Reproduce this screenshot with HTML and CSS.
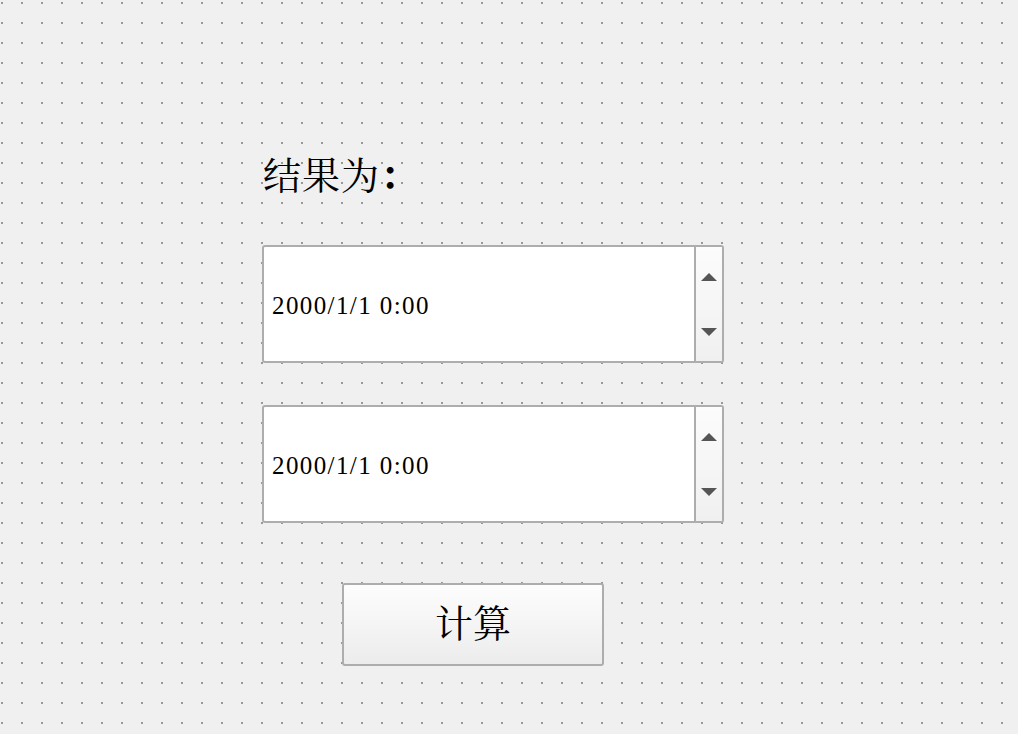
FILE: index.html
```html
<!DOCTYPE html>
<html lang="zh">
<head>
<meta charset="utf-8">
<title>Form</title>
<link rel="stylesheet" href="styles.css">
</head>
<body>
<div class="canvas">
  <div class="label">结果为<span class="colon">：</span></div>
  <div class="spin first">
    <div class="field">2000/1/1 0:00</div>
    <div class="btns">
      <span class="arrow up"></span>
      <span class="arrow down"></span>
    </div>
  </div>
  <div class="spin second">
    <div class="field">2000/1/1 0:00</div>
    <div class="btns">
      <span class="arrow up"></span>
      <span class="arrow down"></span>
    </div>
  </div>
  <button class="calc">计算</button>
</div>
</body>
</html>
```
FILE: styles.css
```css
html, body {
  margin: 0;
  padding: 0;
}
body {
  width: 1018px;
  height: 734px;
  overflow: hidden;
  background-color: #f0f0f0;
  background-image: url("data:image/svg+xml;utf8,<svg xmlns='http://www.w3.org/2000/svg' width='20' height='20'><rect x='1' y='2' width='2' height='2' fill='%23999999'/></svg>");
  background-size: 20px 20px;
}
.canvas {
  box-sizing: border-box;
  height: 734px;
  padding: 150px 0 0 262px;
  display: flex;
  flex-direction: column;
  align-items: flex-start;
}
.label {
  font-family: "Noto Serif CJK SC", "Noto Sans CJK SC", serif;
  font-size: 38px;
  line-height: 46px;
  height: 48px;
  color: #000;
  margin-left: 1px;
  letter-spacing: 1px;
}
.colon {
  display: inline-block;
  margin-left: 0;
  font-weight: bold;
}
.spin {
  box-sizing: border-box;
  width: 462px;
  height: 118px;
  border: 2px solid #adadad;
  border-radius: 3px;
  background: #fff;
  display: flex;
}
.spin.first {
  margin-top: 47px;
}
.spin.second {
  margin-top: 42px;
}
.field {
  flex: 1;
  display: flex;
  align-items: center;
  padding: 4px 0 0 8px;
  font-family: "Liberation Serif", serif;
  font-size: 25px;
  letter-spacing: 1.4px;
  color: #000;
}
.btns {
  box-sizing: border-box;
  width: 28px;
  border-left: 2px solid #adadad;
  background: linear-gradient(#fcfcfc, #f0f0f0);
  display: flex;
  flex-direction: column;
  align-items: center;
  justify-content: space-between;
  padding: 26px 0 25px;
}
.arrow {
  display: block;
  width: 0;
  height: 0;
  border-left: 8px solid transparent;
  border-right: 8px solid transparent;
}
.arrow.up {
  border-bottom: 8px solid #555;
}
.arrow.down {
  border-top: 8px solid #555;
}
.calc {
  margin-top: 60px;
  margin-left: 80px;
  box-sizing: border-box;
  width: 262px;
  height: 83px;
  border: 2px solid #adadad;
  border-radius: 3px;
  background: linear-gradient(#fdfdfd, #ececec);
  font-family: "Noto Serif CJK SC", "Noto Sans CJK SC", serif;
  font-size: 38px;
  color: #000;
  padding: 0 0 8px;
}
```
